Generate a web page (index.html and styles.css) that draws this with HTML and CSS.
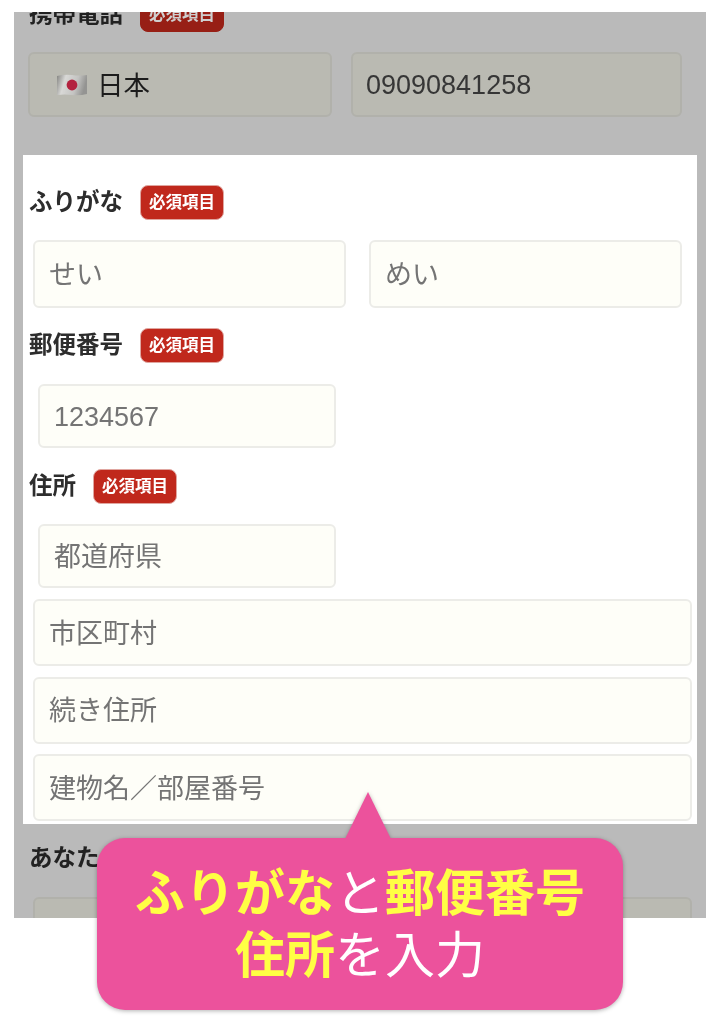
FILE: index.html
```html
<!DOCTYPE html>
<html lang="ja">
<head>
<meta charset="utf-8">
<title>ふりがなと郵便番号、住所を入力</title>
<link rel="stylesheet" href="styles.css">
</head>
<body>
<main class="screen">
  <div class="label-row label-row-top"><span class="label">携帯電話</span><span class="badge">必須項目</span></div>
  <div class="phone-row">
    <div class="field dim country">
      <svg class="flag" viewBox="0 0 30 22" aria-hidden="true">
        <defs><linearGradient id="wave" x1="0" x2="1" y1="0" y2="0.2">
          <stop offset="0" stop-color="#858582"/><stop offset=".3" stop-color="#d8d8d6"/><stop offset=".7" stop-color="#c4c4c2"/><stop offset="1" stop-color="#949492"/>
        </linearGradient></defs>
        <path d="M0 2 Q8 0 15 1 T30 1 V20 Q22 22 15 21 T0 21 Z" fill="url(#wave)"/>
        <circle cx="15" cy="11" r="5.4" fill="#b3223f"/>
      </svg>
      <span>日本</span>
    </div>
    <div class="field dim number latin">09090841258</div>
  </div>

  <section class="panel">
    <div class="label-row"><span class="label">ふりがな</span><span class="badge">必須項目</span></div>
    <div class="name-row">
      <div class="field tall half">せい</div>
      <div class="field tall half">めい</div>
    </div>
    <div class="label-row after-name"><span class="label">郵便番号</span><span class="badge">必須項目</span></div>
    <div class="field short latin">1234567</div>
    <div class="label-row after-short"><span class="label">住所</span><span class="badge">必須項目</span></div>
    <div class="field short">都道府県</div>
    <div class="address-stack">
      <div class="field tall wide">市区町村</div>
      <div class="field tall wide">続き住所</div>
      <div class="field tall wide">建物名／部屋番号</div>
    </div>
  </section>

  <div class="label-row label-row-bottom"><span class="label">あなた</span></div>
  <div class="field dim bottom-field"></div>
</main>

<aside class="bubble">
  <p><b>ふりがな</b>と<b>郵便番号</b></p>
  <p><b>住所</b>を入力</p>
</aside>
</body>
</html>
```
FILE: styles.css
```css
* { box-sizing: border-box; }

html, body { margin: 0; padding: 0; background: #fff; }

body {
  position: relative;
  width: 720px;
  height: 1022px;
  padding: 12px 14px 0;
  overflow: hidden;
  font-family: "Liberation Sans", "Noto Sans CJK JP", sans-serif;
}

.screen {
  width: 692px;
  height: 906px;
  background: #bababa;
  overflow: hidden;
  filter: blur(0.55px);
}

.label-row {
  display: flex;
  align-items: center;
  gap: 17px;
  height: 35px;
  padding-left: 6px;
}

.label-row-top { margin-top: -15px; padding-left: 15px; }
.label-row-bottom { margin-top: 17px; padding-left: 15px; }
.after-name { margin-top: 20px; }
.after-short { margin-top: 21px; }

.label {
  font-size: 23.5px;
  line-height: 35px;
  font-weight: 700;
  color: #2d2d2d;
  white-space: nowrap;
}

.badge {
  display: flex;
  align-items: center;
  justify-content: center;
  width: 84px;
  height: 35px;
  padding-bottom: 3px;
  border-radius: 8px;
  border: 1px solid #e0a6a0;
  background: #c0281c;
  color: #fff;
  font-size: 16.5px;
  font-weight: 700;
  white-space: nowrap;
}

.label-row-top .badge { background: #971f15; border-color: #971f15; color: #cfcfcf; }
.label-row-top .label, .label-row-bottom .label { color: #222; }

.field {
  display: flex;
  align-items: center;
  padding-left: 14px;
  padding-bottom: 3px;
  border: 2px solid #ecece8;
  border-radius: 6px;
  background: #fefef8;
  color: #747474;
  font-size: 27px;
}

.latin { padding-bottom: 0; padding-top: 2px; }

.dim {
  background: #babab2;
  border-color: #b1b1ab;
  color: #363636;
}

.phone-row {
  display: flex;
  gap: 19px;
  margin: 20px 0 38px 14px;
}

.country { width: 304px; height: 65px; padding-left: 27px; padding-bottom: 3px; gap: 10px; color: #1c1c1c; font-size: 26.5px; }
.number { width: 331px; height: 65px; padding-left: 13px; }
.flag { width: 30px; height: 22px; flex: none; margin-top: 3px; }

.panel {
  width: 674px;
  height: 669px;
  margin-left: 9px;
  padding-top: 30px;
  background: #fff;
}

.name-row {
  display: flex;
  gap: 23px;
  margin: 20px 0 0 10px;
}

.tall { height: 68px; padding-left: 14px; }
.half { width: 313px; }

.short {
  width: 298px;
  height: 64px;
  margin: 21px 0 0 15px;
}

.after-short + .short { margin-top: 20px; }

.address-stack {
  display: flex;
  flex-direction: column;
  gap: 10.5px;
  margin: 11px 0 0 10px;
}

.wide { width: 659px; height: 67px; }

.bottom-field {
  width: 659px;
  height: 65px;
  margin: 21px 0 0 19px;
}

.bubble {
  position: absolute;
  left: 97px;
  top: 838px;
  width: 526px;
  height: 172px;
  padding-top: 20px;
  border-radius: 28px;
  background: #ec529c;
  color: #fff;
  font-family: "Noto Sans CJK JP", sans-serif;
  font-size: 50px;
  line-height: 62px;
  text-align: center;
  filter: drop-shadow(0 1px 2px rgba(0, 0, 0, 0.3));
}

.bubble::before {
  content: "";
  position: absolute;
  left: 248px;
  top: -46px;
  border-style: solid;
  border-width: 0 23px 47px 23px;
  border-color: transparent transparent #ec529c transparent;
}

.bubble p { margin: 0; white-space: nowrap; }
.bubble b { color: #ffff44; font-weight: 700; }
```
